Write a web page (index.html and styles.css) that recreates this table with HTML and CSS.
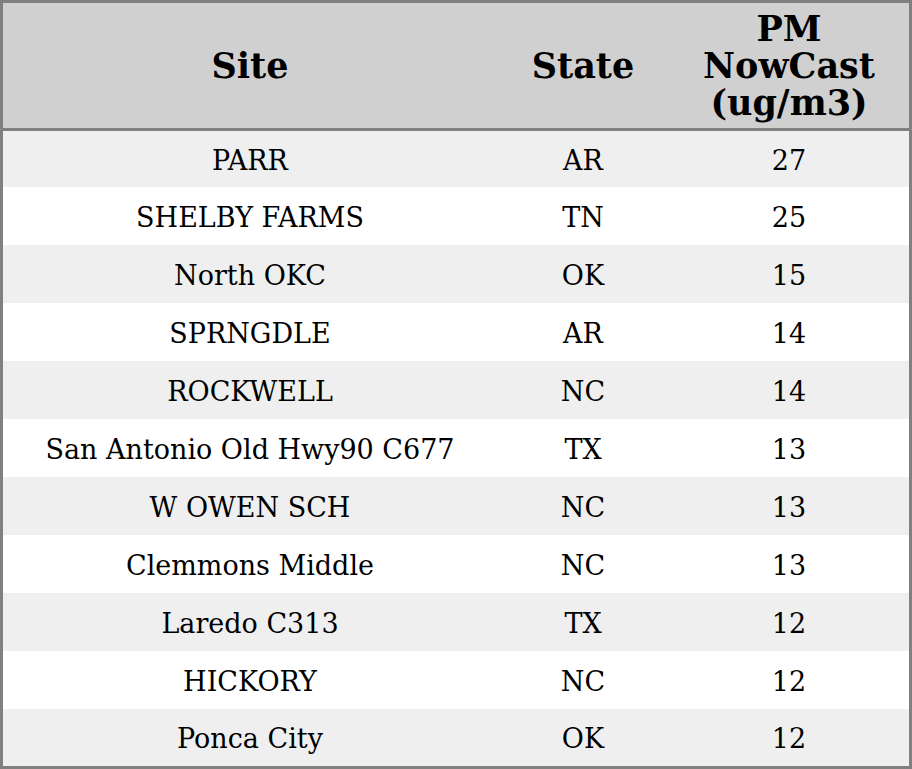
FILE: index.html
```html
<!DOCTYPE html>
<html>
<head>
<meta charset="utf-8">
<link rel="stylesheet" href="styles.css">
</head>
<body>
<table class="aq">
  <thead>
    <tr>
      <th class="c-site">Site</th>
      <th class="c-state">State</th>
      <th class="c-pm">PM<br>NowCast<br>(ug/m3)</th>
    </tr>
  </thead>
  <tbody>
    <tr><td>PARR</td><td>AR</td><td>27</td></tr>
    <tr><td>SHELBY FARMS</td><td>TN</td><td>25</td></tr>
    <tr><td>North OKC</td><td>OK</td><td>15</td></tr>
    <tr><td>SPRNGDLE</td><td>AR</td><td>14</td></tr>
    <tr><td>ROCKWELL</td><td>NC</td><td>14</td></tr>
    <tr><td>San Antonio Old Hwy90 C677</td><td>TX</td><td>13</td></tr>
    <tr><td>W OWEN SCH</td><td>NC</td><td>13</td></tr>
    <tr><td>Clemmons Middle</td><td>NC</td><td>13</td></tr>
    <tr><td>Laredo C313</td><td>TX</td><td>12</td></tr>
    <tr><td>HICKORY</td><td>NC</td><td>12</td></tr>
    <tr><td>Ponca City</td><td>OK</td><td>12</td></tr>
  </tbody>
</table>
</body>
</html>
```
FILE: styles.css
```css
html, body {
  margin: 0;
  padding: 0;
  background: #ffffff;
}
.aq {
  width: 912px;
  border-collapse: separate;
  border-spacing: 0;
  border: 3px solid #808080;
  font-family: "DejaVu Serif", serif;
  color: #000;
  table-layout: fixed;
}
.aq th {
  background: #d0d0d0;
  height: 125px;
  padding: 0;
  font-size: 35px;
  font-weight: bold;
  line-height: 37px;
  text-align: center;
  vertical-align: middle;
  border-bottom: 3px solid #808080;
}
.c-site { width: 494px; }
.c-state { width: 172px; }
.c-pm { width: 240px; }
.aq td {
  box-sizing: border-box;
  height: 58px;
  padding: 3px 0 0 0;
  font-size: 27px;
  line-height: 32px;
  text-align: center;
  vertical-align: middle;
}
.aq tbody tr:nth-child(odd) td { background: #efefef; }
.aq tbody tr:nth-child(even) td { background: #ffffff; }
.aq tbody tr:first-child td { height: 56px; }
.aq tbody tr:last-child td { height: 57px; }
```
